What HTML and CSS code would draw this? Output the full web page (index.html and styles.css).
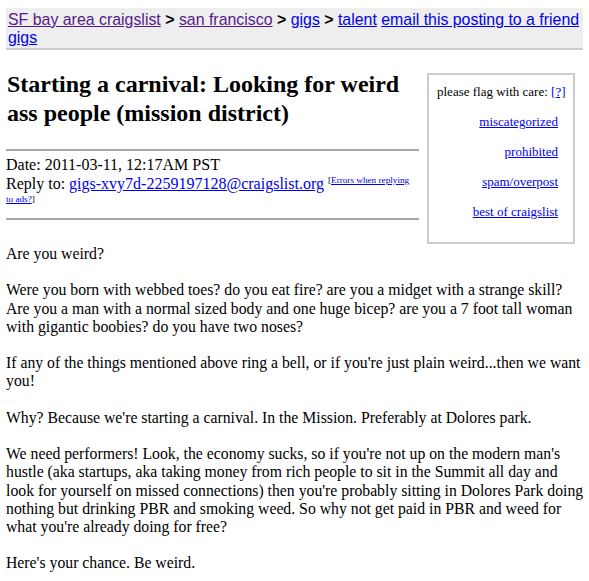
FILE: index.html
```
<!DOCTYPE html>
<html lang="en">
<head>
    <meta charset="UTF-8">
    <title>Starting a carnival: Looking for weird ass people (mission district)</title>
    <link rel="stylesheet" href="styles.css">
</head>
<body>
    <div class="bchead">
        <div class="crumbs"><a class="seen" href="#">SF bay area craigslist</a> <b>&gt;</b> <a class="seen" href="#">san francisco</a> <b>&gt;</b> <a href="#">gigs</a> <b>&gt;</b> <a href="#">talent</a> <a href="#">email this posting to a friend</a></div>
        <div><a href="#">gigs</a></div>
    </div>

    <div class="posthead">
        <div class="postinfo">
            <h2>Starting a carnival: Looking for weird ass people (mission district)</h2>
            <hr>
            <div class="meta">
                Date: 2011-03-11, 12:17AM PST<br>
                Reply to: <a href="#">gigs-xvy7d-2259197128@craigslist.org</a> <sup>[<a href="#">Errors when replying to ads?</a>]</sup>
            </div>
            <hr>
        </div>

        <div class="flagbox">
            <div class="flagtitle">please flag with care: <a href="#">[?]</a></div>
            <a href="#">miscategorized</a>
            <a href="#">prohibited</a>
            <a href="#">spam/overpost</a>
            <a href="#">best of craigslist</a>
        </div>
    </div>

    <!-- line breaks kept as they fall in the posting -->
    <div class="userbody">
        Are you weird?<br>
        <br>
        Were you born with webbed toes? do you eat fire? are you a midget with a strange skill?<br>
        Are you a man with a normal sized body and one huge bicep? are you a 7 foot tall woman<br>
        with gigantic boobies? do you have two noses?<br>
        <br>
        If any of the things mentioned above ring a bell, or if you're just plain weird...then we want<br>
        you!<br>
        <br>
        Why? Because we're starting a carnival. In the Mission. Preferably at Dolores park.<br>
        <br>
        We need performers! Look, the economy sucks, so if you're not up on the modern man's<br>
        hustle (aka startups, aka taking money from rich people to sit in the Summit all day and<br>
        look for yourself on missed connections) then you're probably sitting in Dolores Park doing<br>
        nothing but drinking PBR and smoking weed. So why not get paid in PBR and weed for<br>
        what you're already doing for free?<br>
        <br>
        Here's your chance. Be weird.
    </div>
</body>
</html>
```

FILE: styles.css
```
body {
    margin: 8px 6px;
    font-family: "Liberation Serif", "Times New Roman", serif;
    font-size: 16px;
    line-height: 18px;
    color: #000;
    background: #fff;
}
a { color: #0000ee; }
a.seen { color: #551a8b; }

.bchead {
    background: #eee;
    border-bottom: 2px solid #ccc;
    padding: 3px 2px 1px;
    font-family: "Liberation Sans", Arial, sans-serif;
    font-size: 15.9px;
    line-height: 18px;
}
.crumbs {
    white-space: nowrap;
}

.posthead {
    display: flex;
    align-items: flex-start;
}
.postinfo {
    width: 413px;
}
.postinfo h2 {
    font-size: 24px;
    line-height: 29px;
    margin: 20px 0 21px 1px;
}
.postinfo hr {
    border: 0;
    border-top: 2px solid #a8a8a8;
    margin: 0;
}
.meta {
    padding: 4px 6px 6px 0;
    line-height: 19px;
}
.meta sup {
    font-size: 9.2px;
    line-height: 10px;
    vertical-align: 6px;
}

.flagbox {
    margin: 23px 8px 0 auto;
    width: 144px;
    border: 2px solid #ccc;
    padding: 2px 0 15px;
    font-size: 13px;
    line-height: 30px;
    text-align: right;
}
.flagtitle {
    text-align: left;
    padding-left: 8px;
}
.flagbox > a {
    display: block;
    padding-right: 15px;
}

.userbody {
    margin-top: 1px;
    font-size: 15.75px;
    line-height: 18.2px;
    white-space: nowrap;
}
```
